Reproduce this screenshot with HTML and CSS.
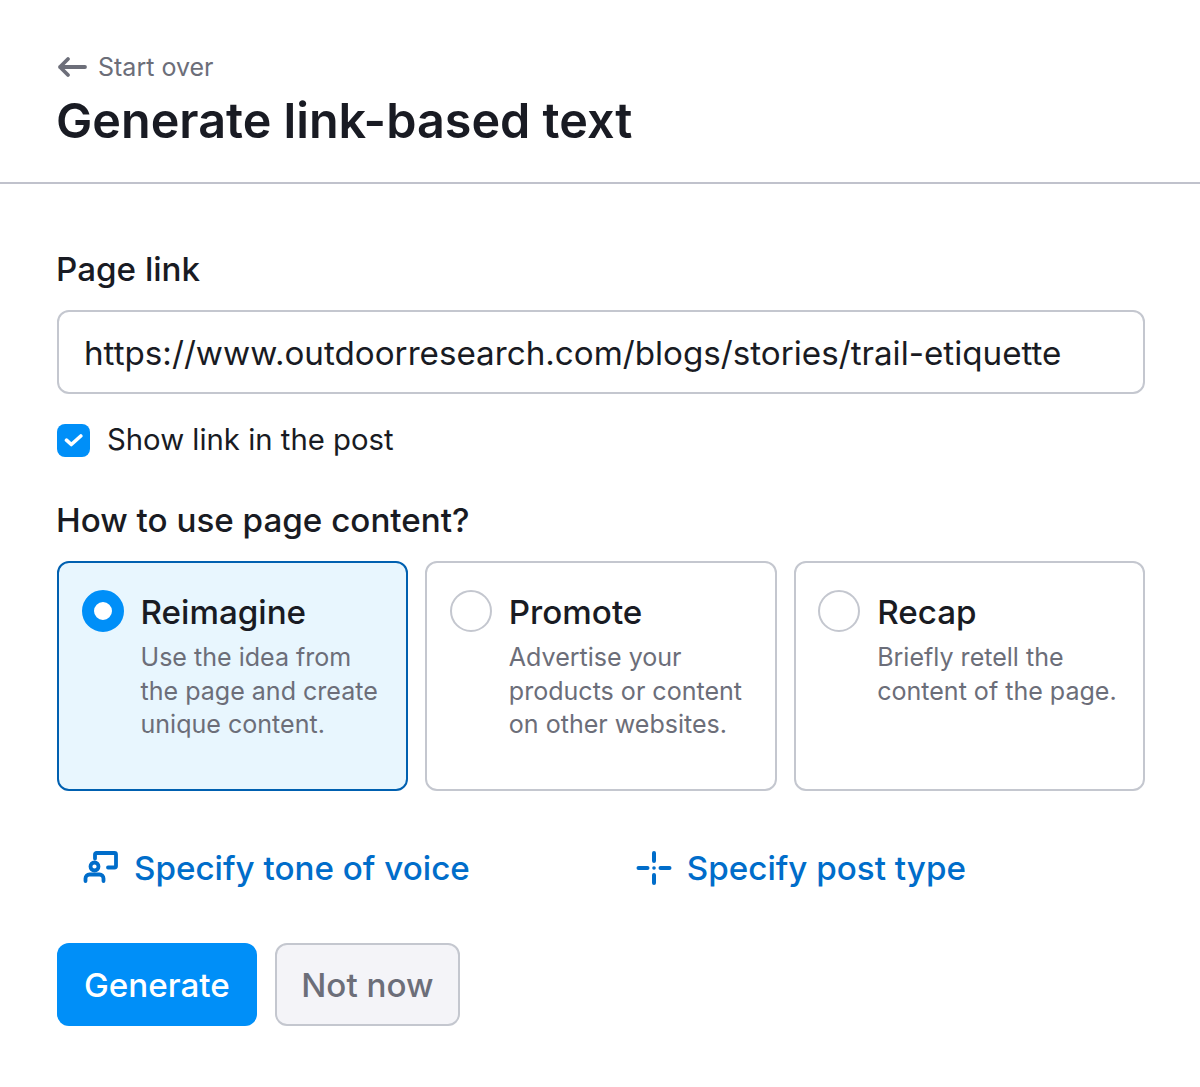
FILE: index.html
```html
<!DOCTYPE html>
<html lang="en">
<head>
<meta charset="utf-8">
<title>Generate link-based text</title>
<link rel="stylesheet" href="styles.css">
</head>
<body>
<header class="head">
  <a class="back"><svg class="back-icon" width="32" height="24" viewBox="0 0 32 24"><path d="M29 12H4M12 4l-8 8 8 8" fill="none" stroke="#6c6e79" stroke-width="3.800" stroke-linecap="round" stroke-linejoin="round"/></svg><span>Start over</span></a>
  <h1>Generate link-based text</h1>
</header>
<main class="form">
  <h2 class="label">Page link</h2>
  <div class="input"><span class="input-text">https://www.outdoorresearch.com/blogs/stories/trail-etiquette</span></div>
  <label class="check"><span class="box"><svg width="20" height="20" viewBox="0 0 20 20"><path d="M2.500 10.200l4.800 4.300 9.500-8.500" fill="none" stroke="#fff" stroke-width="3.600" stroke-linecap="round" stroke-linejoin="round"/></svg></span>Show link in the post</label>
  <h2 class="label label-use">How to use page content?</h2>
  <div class="cards">
    <div class="card selected"><span class="radio on"></span><div><div class="title">Reimagine</div><p>Use the idea from the page and create unique content.</p></div></div>
    <div class="card"><span class="radio"></span><div><div class="title">Promote</div><p>Advertise your products or content on other websites.</p></div></div>
    <div class="card"><span class="radio"></span><div><div class="title">Recap</div><p>Briefly retell the content of the page.</p></div></div>
  </div>
  <div class="links">
    <a class="link link-tone"><svg width="36" height="36" viewBox="0 0 36 36" fill="none" stroke="#006dca" stroke-width="3.800" stroke-linecap="round" stroke-linejoin="round"><path d="M12 8.500V4.500a1.500 1.500 0 0 1 1.500-1.500H31.500a1.500 1.500 0 0 1 1.500 1.500V16a1.500 1.500 0 0 1-1.500 1.500H25"/><circle cx="11.500" cy="16.500" r="4"/><path d="M2.500 31v-2.500a4 4 0 0 1 4-4h10a4 4 0 0 1 4 4V31"/></svg><span>Specify tone of voice</span></a>
    <a class="link link-type"><svg width="36" height="36" viewBox="0 0 36 36" fill="none" stroke="#006dca" stroke-width="4" stroke-linecap="round"><path d="M18 3v8M18 25v8M2.500 18h9M24.500 18h9"/><circle cx="18" cy="18" r="1.800" fill="#006dca" stroke="none"/></svg><span>Specify post type</span></a>
  </div>
  <div class="actions">
    <button class="btn primary">Generate</button>
    <button class="btn secondary">Not now</button>
  </div>
</main>
</body>
</html>
```

FILE: styles.css
```css
* { box-sizing: border-box; }
html, body { margin: 0; padding: 0; }
body {
  width: 1200px;
  height: 1087px;
  overflow: hidden;
  background: #fff;
  color: #191b23;
  font-family: Inter, "Liberation Sans", sans-serif;
}
.head {
  height: 184px;
  padding: 50px 0 0 57px;
  border-bottom: 2px solid #c0c2cc;
}
.back {
  display: flex;
  align-items: center;
  gap: 10px;
  height: 34px;
  color: #6c6e79;
  font-size: 25px;
}
.back-icon { margin-left: -1px; }
h1 {
  margin: 3px 0 0 -1px;
  font-size: 48.500px;
  line-height: 68px;
  font-weight: 600;
}
.form { padding: 63px 55px 0 57px; }
.label {
  margin: 0 0 0 -1px;
  font-size: 33.200px;
  line-height: 44px;
  font-weight: 500;
}
.input {
  margin-top: 19px;
  height: 84px;
  display: flex;
  align-items: center;
  padding: 2px 25px 0;
  border: 2px solid #c4c7cf;
  border-radius: 12px;
  font-size: 33.200px;
}
.check {
  margin-top: 29px;
  display: flex;
  align-items: center;
  gap: 17px;
  font-size: 29.300px;
  line-height: 34px;
}
.box {
  width: 33px;
  height: 33px;
  display: flex;
  align-items: center;
  justify-content: center;
  border-radius: 8px;
  background: #008ff8;
}
.label-use { margin-top: 41px; }
.cards {
  margin-top: 19px;
  display: grid;
  grid-template-columns: repeat(3, 1fr);
  gap: 17px;
}
.card {
  height: 230px;
  display: flex;
  gap: 17px;
  padding: 27px 22.500px;
  border: 2px solid #c4c7cf;
  border-radius: 12px;
}
.card.selected { background: #e8f6fe; border-color: #0060b0; }
.radio {
  flex: none;
  width: 42px;
  height: 42px;
  border: 2px solid #c4c7cf;
  border-radius: 50%;
  background: #fff;
}
.radio.on { border: 12px solid #008ff8; }
.title { font-size: 33.200px; line-height: 44px; font-weight: 500; }
.card p {
  margin: 7px 0 0;
  color: #6c6e79;
  font-size: 25.050px;
  line-height: 33.500px;
}
.links { margin-top: 52px; display: flex; height: 50px; align-items: center; }
.link {
  display: flex;
  align-items: center;
  gap: 15px;
  color: #006dca;
  font-size: 33.200px;
  font-weight: 500;
}
.link-tone { margin-left: 26px; }
.link-type { margin-left: 166px; }
.actions { margin-top: 50px; display: flex; gap: 18px; }
.btn {
  height: 83px;
  padding: 0 25px;
  border-radius: 12px;
  font-family: inherit;
  font-size: 33.200px;
  font-weight: 500;
}
.primary { border: 0; background: #008ff8; color: #fff; padding: 0 27px; }
.secondary { border: 2px solid #c4c7cf; background: #f4f4f8; color: #6c6e79; padding: 0 24.500px; }
```
